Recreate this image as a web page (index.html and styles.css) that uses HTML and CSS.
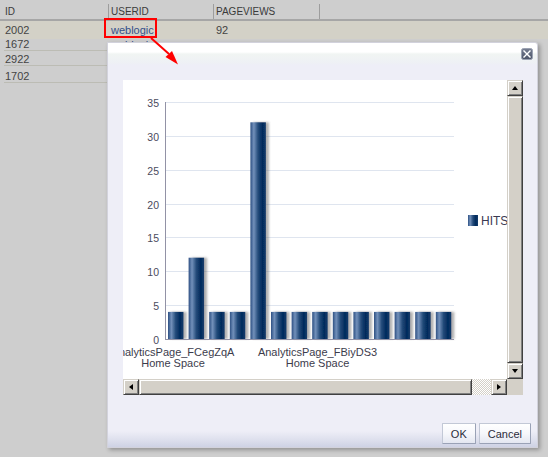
FILE: index.html
```html
<!DOCTYPE html>
<html>
<head>
<meta charset="utf-8">
<link rel="stylesheet" href="styles.css">
</head>
<body>
<div class="page">
  <div class="table">
    <div class="thead">
      <div class="th c1">ID</div>
      <div class="th c2">USERID</div>
      <div class="th c3">PAGEVIEWS</div>
      <div class="th c4"></div>
    </div>
    <div class="tr r1">
      <div class="td c1">2002</div>
      <div class="td c2"><span class="link">weblogic</span></div>
      <div class="td c3">92</div>
      <div class="td c4"></div>
    </div>
    <div class="tr rs r2">
      <div class="td c1">1672</div>
      <div class="td c2"><span class="link">weblogic</span></div>
      <div class="td c3"></div>
      <div class="td c4"></div>
    </div>
    <div class="tr rs r3">
      <div class="td c1">2922</div>
      <div class="td c2"></div>
      <div class="td c3"></div>
      <div class="td c4"></div>
    </div>
    <div class="tr rs r4">
      <div class="td c1">1702</div>
      <div class="td c2"></div>
      <div class="td c3"></div>
      <div class="td c4"></div>
    </div>
  </div>

  <div class="dialog">
    <div class="dlg-head">
      <div class="close" title="Close">
        <svg width="12" height="12" viewBox="0 0 12 12">
          <defs>
            <linearGradient id="cg" x1="0" y1="0" x2="0" y2="1">
              <stop offset="0" stop-color="#767e92"/>
              <stop offset="1" stop-color="#4c5468"/>
            </linearGradient>
          </defs>
          <rect x="0.5" y="0.5" width="11" height="11" rx="2" fill="url(#cg)" stroke="#9aa1b1"/>
          <path d="M3 3 L9 9 M9 3 L3 9" stroke="#fff" stroke-width="1.4" stroke-linecap="square"/>
        </svg>
      </div>
    </div>
    <div class="dlg-body">
      <div class="panel">
        <div class="chart">
          <svg class="plot" width="384" height="299" viewBox="0 0 384 299">
            <defs>
              <linearGradient id="bar" x1="0" y1="0" x2="1" y2="0">
                <stop offset="0" stop-color="#2d5083"/>
                <stop offset="0.22" stop-color="#7290ba"/>
                <stop offset="0.5" stop-color="#234a79"/>
                <stop offset="0.78" stop-color="#002a5c"/>
                <stop offset="1" stop-color="#163d6c"/>
              </linearGradient>
              <filter id="sh" x="-30%" y="-10%" width="170%" height="120%">
                <feDropShadow dx="3" dy="0" stdDeviation="1.3" flood-color="#555" flood-opacity="0.45"/>
              </filter>
            </defs>
            <g class="grid">
              <rect x="42" y="22" width="289" height="1"/>
              <rect x="42" y="56" width="289" height="1"/>
              <rect x="42" y="90" width="289" height="1"/>
              <rect x="42" y="124" width="289" height="1"/>
              <rect x="42" y="157" width="289" height="1"/>
              <rect x="42" y="191" width="289" height="1"/>
              <rect x="42" y="225" width="289" height="1"/>
            </g>
            <g class="ylab">
              <text x="36" y="22.5">35</text>
              <text x="36" y="56.5">30</text>
              <text x="36" y="90.5">25</text>
              <text x="36" y="124.5">20</text>
              <text x="36" y="157.5">15</text>
              <text x="36" y="191.5">10</text>
              <text x="36" y="225.5">5</text>
              <text x="36" y="259.5">0</text>
            </g>
            <g fill="url(#bar)" filter="url(#sh)">
              <rect x="45" y="231.9" width="15.5" height="27.1"/>
              <rect x="65.6" y="177.7" width="15.5" height="81.3"/>
              <rect x="86.2" y="231.9" width="15.5" height="27.1"/>
              <rect x="106.8" y="231.9" width="15.5" height="27.1"/>
              <rect x="127.4" y="42.3" width="15.5" height="216.7"/>
              <rect x="148" y="231.9" width="15.5" height="27.1"/>
              <rect x="168.6" y="231.9" width="15.5" height="27.1"/>
              <rect x="189.2" y="231.9" width="15.5" height="27.1"/>
              <rect x="209.8" y="231.9" width="15.5" height="27.1"/>
              <rect x="230.4" y="231.9" width="15.5" height="27.1"/>
              <rect x="251" y="231.9" width="15.5" height="27.1"/>
              <rect x="271.6" y="231.9" width="15.5" height="27.1"/>
              <rect x="292.2" y="231.9" width="15.5" height="27.1"/>
              <rect x="312.8" y="231.9" width="15.5" height="27.1"/>
            </g>
            <rect class="axis" x="42" y="22" width="1" height="238"/>
            <rect class="axis" x="42" y="259" width="289" height="1"/>
            <g class="xlab">
              <text x="50" y="276">AnalyticsPage_FCegZqA</text>
              <text x="50" y="287">Home Space</text>
              <text x="194.5" y="276">AnalyticsPage_FBiyDS3</text>
              <text x="194.5" y="287">Home Space</text>
            </g>
            <rect x="345" y="135" width="10" height="11" fill="url(#bar)"/>
            <text class="legend" x="358" y="144.5">HITS</text>
          </svg>
        </div>
        <div class="vscroll">
          <div class="sb-btn"><span class="tri up"></span></div>
          <div class="sb-thumb"></div>
          <div class="sb-btn"><span class="tri down"></span></div>
        </div>
        <div class="hscroll">
          <div class="sb-btn"><span class="tri left"></span></div>
          <div class="sb-thumb hthumb"></div>
          <div class="sb-track"></div>
          <div class="sb-btn"><span class="tri right"></span></div>
        </div>
        <div class="corner"></div>
      </div>
    </div>
    <div class="dlg-foot">
      <button class="btn">OK</button>
      <button class="btn">Cancel</button>
    </div>
  </div>

  <div class="callout"></div>
  <svg class="arrow" width="50" height="45" viewBox="0 0 50 45">
    <line x1="11" y1="8" x2="29" y2="24" stroke="#f00" stroke-width="2"/>
    <polygon points="25.5,27 32,21 38,34.5" fill="#f00"/>
  </svg>
</div>
</body>
</html>
```

FILE: styles.css
```css
* { box-sizing: border-box; }
html, body { margin: 0; padding: 0; }
body {
  width: 548px;
  height: 457px;
  overflow: hidden;
  background: #cecece;
  font-family: "Liberation Sans", Arial, sans-serif;
  font-size: 11px;
  color: #404040;
}
.page {
  position: relative;
  width: 548px;
  height: 457px;
}

/* table */
.thead, .tr {
  display: grid;
  grid-template-columns: 109px 105px 106px 1fr;
}
.thead {
  height: 21px;
  border-bottom: 2px solid #a6a6a6;
}
.th {
  margin-top: 4px;
  height: 15px;
  line-height: 15px;
  font-size: 10px;
  color: #3a3a3a;
  border-right: 1px solid #9d9d9d;
  white-space: nowrap;
}
.th.c4 { border-right: none; }
.c1 { padding-left: 5px; }
.c2, .c3 { padding-left: 2px; }
.tr.r1 {
  height: 18px;
  line-height: 18px;
  background: #d3d1c7;
}
.td { white-space: nowrap; color: #444; }
.link { color: #34508a; }
.tr.rs .td {
  display: flex;
  align-items: flex-end;
  line-height: 11px;
}
.tr.rs .td.c1 {
  margin-left: 4px;
  padding-left: 1px;
  border-bottom: 1px solid #bcbcb4;
}
.tr.r2 { height: 12px; }
.tr.r3 { height: 15px; }
.tr.r4 { height: 17px; }

/* annotation */
.callout {
  position: absolute;
  left: 104px;
  top: 18px;
  width: 53px;
  height: 20px;
  border: 2px solid #ff0000;
}
.arrow {
  position: absolute;
  left: 140px;
  top: 30px;
}

/* dialog */
.dialog {
  position: absolute;
  left: 107px;
  top: 42px;
  width: 431px;
  height: 406px;
  border: 1px solid #d2d2dc;
  border-radius: 0 3px 0 0;
  box-shadow: 2px 2px 4px rgba(0, 0, 0, 0.3);
  display: flex;
  flex-direction: column;
  background: linear-gradient(to bottom,
    #ffffff 0, #ffffff 9px, #f1f5f3 11px, #eef0f5 20px, #eeeef7 22px,
    #eeeef7 calc(100% - 16px), #dfe1ee calc(100% - 8px), #ced2e4 100%);
}
.dlg-head {
  height: 37px;
  display: flex;
  justify-content: flex-end;
  align-items: flex-start;
  padding: 5px 4px 0 0;
}
.close { width: 12px; height: 12px; line-height: 0; }
.dlg-body { padding-left: 15px; }
.panel {
  width: 400px;
  display: grid;
  grid-template-columns: 384px 16px;
  grid-template-rows: 299px 16px;
  background: #ffffff;
}
.chart { overflow: hidden; background: #fff; }
.plot { display: block; }
.plot .grid rect { fill: #dfe5ef; }
.plot .axis { fill: #9292a6; }
.plot text {
  font-family: "Liberation Sans", Arial, sans-serif;
}
.plot .ylab text {
  font-size: 10.5px;
  fill: #4b4b5d;
  text-anchor: end;
  dominant-baseline: central;
}
.plot .xlab text {
  font-size: 11px;
  fill: #3c3c4c;
  text-anchor: middle;
}
.plot .legend {
  font-size: 12px;
  fill: #3a3a52;
}

/* classic scrollbars */
.vscroll {
  display: flex;
  flex-direction: column;
  background: #d4d0c8;
}
.hscroll {
  display: flex;
  background: #d4d0c8;
}
.corner { background: #d4d0c8; }
.sb-btn, .sb-thumb {
  background: #d4d0c8;
  border: 1px solid;
  border-color: #d4d0c8 #404040 #404040 #d4d0c8;
  box-shadow: inset 1px 1px #ffffff, inset -1px -1px #808080;
}
.sb-btn {
  width: 16px;
  height: 16px;
  flex: none;
  display: flex;
  align-items: center;
  justify-content: center;
}
.vscroll .sb-thumb { flex: 1; }
.hthumb { width: 333px; flex: none; }
.sb-track {
  flex: 1;
  background-color: #d4d0c8;
  background-image: conic-gradient(#ffffff 25%, #d4d0c8 0 50%, #ffffff 0 75%, #d4d0c8 0);
  background-size: 2px 2px;
}
.tri { width: 0; height: 0; display: block; }
.tri.up {
  border-left: 3.5px solid transparent;
  border-right: 3.5px solid transparent;
  border-bottom: 4px solid #000;
}
.tri.down {
  border-left: 3.5px solid transparent;
  border-right: 3.5px solid transparent;
  border-top: 4px solid #000;
}
.tri.left {
  border-top: 3.5px solid transparent;
  border-bottom: 3.5px solid transparent;
  border-right: 4px solid #000;
}
.tri.right {
  border-top: 3.5px solid transparent;
  border-bottom: 3.5px solid transparent;
  border-left: 4px solid #000;
}

/* footer buttons */
.dlg-foot {
  margin-top: auto;
  display: flex;
  justify-content: flex-end;
  gap: 3px;
  padding: 0 6px 3px 0;
}
.btn {
  height: 21px;
  padding: 0 8px;
  font-family: "Liberation Sans", Arial, sans-serif;
  font-size: 11px;
  color: #2c2c3a;
  border: 1px solid;
  border-color: #c2c8d6 #9aa2b6 #9aa2b6 #c2c8d6;
  border-radius: 1px;
  background: linear-gradient(to bottom, #ffffff 0, #f6f7fb 50%, #e4e7f1 100%);
}
```
